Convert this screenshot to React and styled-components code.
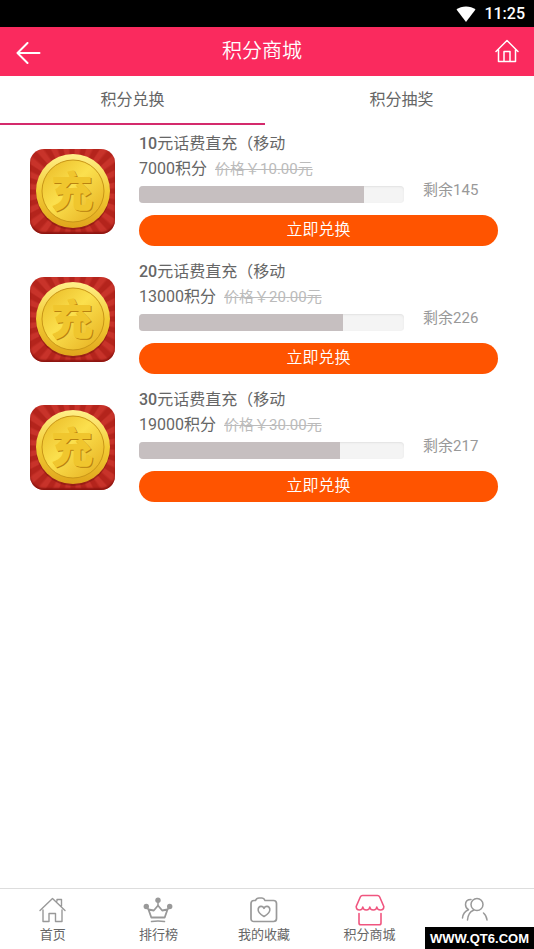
import React from 'react';
import styled, { createGlobalStyle } from 'styled-components';

const GlobalStyle = createGlobalStyle`
  * { box-sizing: border-box; }
  body {
    margin: 0;
    background: #fff;
    color: #666;
    font-family: Roboto, "Noto Sans CJK SC", sans-serif;
    font-size: 16px;
  }
  button { font: inherit; border: 0; padding: 0; background: none; cursor: pointer; }
  a { color: inherit; text-decoration: none; }
  svg { display: block; }
`;

const Page = styled.div`
  min-height: 100vh;
  display: flex;
  flex-direction: column;
`;

const StatusBar = styled.div`
  height: 27px;
  padding: 0 9px;
  display: flex;
  align-items: center;
  justify-content: flex-end;
  gap: 8px;
  background: #000;
  color: #fff;
  font-size: 16px;
  font-weight: 500;
  line-height: 28px;
`;

const Header = styled.header`
  height: 49px;
  display: flex;
  background: #fa2a5e;
  color: #fff;
`;

const Title = styled.h1`
  flex: 1;
  margin: 0;
  text-align: center;
  font-size: 20px;
  font-weight: 350;
  line-height: 48px;
`;

const BackButton = styled.button`
  width: 44px;
  padding-left: 16px;
  padding-top: 2px;
  color: #fff;
`;

const HomeLink = styled.a`
  width: 54px;
  padding-bottom: 2px;
  display: flex;
  align-items: center;
  justify-content: center;
`;

const Tabs = styled.div`
  display: grid;
  grid-template-columns: 1fr 1fr;
  gap: 4px;
`;

const Tab = styled.button`
  height: 49px;
  line-height: 44px;
  color: #666;
  border-bottom: 2px solid ${(p) => (p['aria-selected'] ? '#d42a6c' : 'transparent')};
`;

const List = styled.ul`
  flex: 1;
  list-style: none;
  margin: 0;
  padding: 0;
`;

const Card = styled.li`
  display: flex;
  align-items: flex-start;
  gap: 24px;
  padding: 5px 36px 7px 30px;
`;

const CoinFrame = styled.div`
  flex: none;
  width: 85px;
  height: 85px;
  margin-top: 19px;
  border-radius: 14px;
  overflow: hidden;
  background: repeating-conic-gradient(from 4deg at 50% 50%, #c8332a 0deg 5deg, #b4241c 8deg 13deg, #c8332a 15deg);
  box-shadow: inset 0 -2px 2px #8c1510;
`;

const Details = styled.div`
  flex: 1;
  min-width: 0;
`;

const Name = styled.h2`
  margin: 0;
  font-size: 16px;
  font-weight: 400;
  line-height: 28px;
  height: 26px;
  color: #666;
  b { font-weight: 500; }
`;

const Cost = styled.div`
  display: flex;
  gap: 8px;
  line-height: 26px;
`;

const Points = styled.span`
  color: #666;
`;

const Price = styled.del`
  font-size: 15px;
  color: #bbb;
`;

const StockRow = styled.div`
  display: flex;
  align-items: flex-start;
  gap: 19px;
  height: 33px;
`;

const Track = styled.div`
  flex: 1;
  height: 17px;
  margin-top: 4px;
  border-radius: 4px;
  overflow: hidden;
  background: #f4f4f4;
  box-shadow: inset 0 1px 2px #e2e2e2;
`;

const Fill = styled.div`
  height: 100%;
  background: #c6bfc0;
`;

const Stock = styled.span`
  width: 75px;
  font-size: 15px;
  line-height: 16px;
  color: #999;
`;

const RedeemButton = styled.button`
  display: block;
  width: 100%;
  height: 31px;
  padding-bottom: 2px;
  border-radius: 16px;
  background: #ff5400;
  color: #fff;
  font-weight: 350;
  line-height: 29px;
`;

const Nav = styled.nav`
  display: grid;
  grid-template-columns: repeat(5, 1fr);
  padding: 4px 6px 8px 0;
  border-top: 1px solid #ddd;
`;

const NavItem = styled.a`
  display: flex;
  flex-direction: column;
  align-items: center;
  color: ${(p) => (p['aria-current'] ? '#f0557f' : '#999')};
`;

const NavIcon = styled.span`
  height: 34px;
  display: flex;
  align-items: center;
`;

const NavLabel = styled.span`
  font-size: 13px;
  line-height: 16px;
  height: 14px;
  color: #666;
`;

const SiteMark = styled.div`
  position: fixed;
  right: 0;
  bottom: 0;
  width: 109px;
  height: 22px;
  background: #000;
  color: #fff;
  text-align: center;
  font-family: "Liberation Sans", sans-serif;
  font-size: 13px;
  font-weight: 700;
  line-height: 24px;
  white-space: nowrap;
`;

const line = { fill: 'none', stroke: 'currentColor', strokeLinecap: 'round', strokeLinejoin: 'round' };

const WifiIcon = () => (
  <svg width="20" height="16" viewBox="0 0 20 16" aria-hidden="true">
    <path d="M10 16 0.5 3.6C3 1.500 6.300 0.400 10 0.400s7 1.100 9.500 3.200z" fill="#fff" />
  </svg>
);

const BackIcon = () => (
  <svg width="25" height="22" viewBox="0 0 25 22" aria-hidden="true">
    <path d="M11.500 1 1.500 11l10 10M2 11h21.500" {...line} strokeWidth="2" />
  </svg>
);

const HomeIcon = () => (
  <svg width="24" height="24" viewBox="0 0 24 24" aria-hidden="true">
    <path d="M1 12.500 12 1.500l11 11M3.500 11v11.500h17V11M9 22.500v-10h6v10" {...line} strokeWidth="1.500" />
  </svg>
);

const HouseIcon = () => (
  <svg width="27" height="26" viewBox="0 0 27 26" aria-hidden="true">
    <path d="M1 13.500 13.500 1.500 26 13.500M18 4V2.500h4.500V9M4 13v11.500h6v-8h6.500v8H23V13" {...line} strokeWidth="1.400" />
  </svg>
);

const CrownIcon = () => (
  <svg width="30" height="26" viewBox="0 0 30 26" aria-hidden="true">
    <path d="M15 8.500 10.800 13.500 5.500 12.500 8.300 20.500h13.400l2.800-8-5.300 1z" {...line} strokeWidth="1.800" />
    <path d="M8.500 24.500q6.500-1.200 13 0M15 4v4M3.500 10l2 2.500M26.500 10l-2 2.500" {...line} strokeWidth="1.500" />
    <circle cx="15" cy="3.300" r="2.700" fill="currentColor" />
    <circle cx="3.300" cy="9.500" r="2.700" fill="currentColor" />
    <circle cx="26.700" cy="9.500" r="2.700" fill="currentColor" />
  </svg>
);

const FolderHeartIcon = () => (
  <svg width="28" height="26" viewBox="0 0 28 26" aria-hidden="true">
    <path d="M4 3.500h1.500Q6.500 1 9 1h3q2 0 3 2.500h8.500q3 0 3 3V21.500q0 3-3 3H4q-3 0-3-3V6.500q0-3 3-3z" {...line} strokeWidth="1.700" />
    <path d="M14 19.500C9.500 17 7.800 14.500 8.200 12c.6-3.200 4.500-3.500 5.800-.7 1.300-2.800 5.200-2.500 5.800.7.400 2.500-1.300 5-5.800 7.500z" {...line} strokeWidth="1.600" />
  </svg>
);

const ShopIcon = () => (
  <svg width="30" height="32" viewBox="0 0 30 32" aria-hidden="true">
    <path d="M7.500 1.500h15q1.500 0 2.200 1.500L28.800 12.500q0 3.500-3.300 3.500t-3.700-3q-.3 3-3.500 3t-3.500-3q-.3 3-3.500 3t-3.500-3q-.3 3-3.400 3T1.200 12.500L5.300 3q.7-1.500 2.200-1.500zM4 19.500v9.500q0 1.800 1.800 1.800h18.400q1.800 0 1.800-1.800v-9.500" {...line} strokeWidth="1.600" />
  </svg>
);

const PeopleIcon = () => (
  <svg width="28" height="26" viewBox="0 0 28 26" aria-hidden="true">
    <circle cx="16" cy="7.500" r="6" {...line} strokeWidth="1.500" />
    <path d="M6.500 23q.5-7.500 6-9.800M22.500 16q3 2.500 3.500 7M10 2.500Q4.500 2.500 4.500 7.500q0 3.500 3 5.200Q2 15 1.500 21" {...line} strokeWidth="1.500" />
  </svg>
);

const Coin = () => (
  <svg width="85" height="85" viewBox="0 0 85 85" role="img" aria-label="话费充值">
    <defs>
      <linearGradient id="rim" x1="0" y1="0" x2="0" y2="1">
        <stop offset="0" stopColor="#fff08a" />
        <stop offset="0.5" stopColor="#f3cc35" />
        <stop offset="1" stopColor="#e0a51c" />
      </linearGradient>
      <linearGradient id="face" x1="0" y1="0" x2="1" y2="1">
        <stop offset="0" stopColor="#e9b722" />
        <stop offset="0.45" stopColor="#fbe04e" />
        <stop offset="1" stopColor="#e5ac1d" />
      </linearGradient>
    </defs>
    <circle cx="43" cy="44" r="37" fill="#7c130d" opacity="0.5" />
    <circle cx="43" cy="42" r="37" fill="url(#rim)" />
    <circle cx="43" cy="42" r="31" fill="url(#face)" stroke="#c89518" strokeWidth="1" />
    <g fontFamily="Noto Sans CJK SC, sans-serif" fontSize="42" fontWeight="900" textAnchor="middle">
      <text x="43" y="59" fill="#b98210" aria-hidden="true">充</text>
      <text x="42" y="58" fill="#f0c62e">充</text>
    </g>
  </svg>
);

const products = [
  { value: 10, points: 7000, left: 145, fill: 85 },
  { value: 20, points: 13000, left: 226, fill: 77 },
  { value: 30, points: 19000, left: 217, fill: 76 },
];

const navItems = [
  { label: '首页', Icon: HouseIcon },
  { label: '排行榜', Icon: CrownIcon },
  { label: '我的收藏', Icon: FolderHeartIcon },
  { label: '积分商城', Icon: ShopIcon, current: true },
  { Icon: PeopleIcon, name: '我的' },
];

function Product({ value, points, left, fill }) {
  return (
    <Card>
      <CoinFrame><Coin /></CoinFrame>
      <Details>
        <Name><b>{value}</b>元话费直充（移动</Name>
        <Cost>
          <Points>{points}积分</Points>
          <Price>价格￥{value}.00元</Price>
        </Cost>
        <StockRow>
          <Track role="progressbar" aria-label="兑换进度" aria-valuenow={fill}>
            <Fill style={{ width: `${fill}%` }} />
          </Track>
          <Stock>剩余{left}</Stock>
        </StockRow>
        <RedeemButton type="button">立即兑换</RedeemButton>
      </Details>
    </Card>
  );
}

export default function App() {
  return (
    <Page lang="zh-CN">
      <GlobalStyle />
      <StatusBar><WifiIcon /><span>11:25</span></StatusBar>
      <Header>
        <BackButton type="button" aria-label="返回"><BackIcon /></BackButton>
        <Title>积分商城</Title>
        <HomeLink href="#home" aria-label="首页"><HomeIcon /></HomeLink>
      </Header>
      <Tabs role="tablist">
        <Tab type="button" role="tab" aria-selected={true}>积分兑换</Tab>
        <Tab type="button" role="tab">积分抽奖</Tab>
      </Tabs>
      <List>
        {products.map((p) => <Product key={p.value} {...p} />)}
      </List>
      <Nav>
        {navItems.map(({ label, name, Icon, current }) => (
          <NavItem key={label || name} href="#nav" aria-label={label || name} aria-current={current ? 'page' : undefined}>
            <NavIcon><Icon /></NavIcon>
            {label && <NavLabel>{label}</NavLabel>}
          </NavItem>
        ))}
      </Nav>
      <SiteMark>WWW.QT6.COM</SiteMark>
    </Page>
  );
}
